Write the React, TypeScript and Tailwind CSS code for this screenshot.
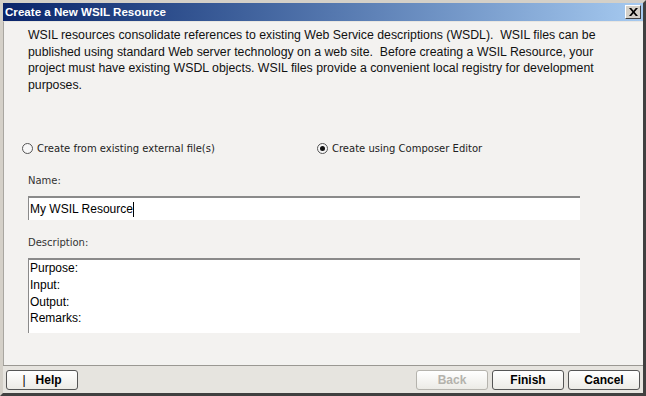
const sans = { fontFamily: '"Liberation Sans", Arial, sans-serif' };
const dejavu = { fontFamily: '"DejaVu Sans", sans-serif' };

function Radio({ checked, label }: { checked?: boolean; label: string }) {
  return (
    <label className="flex items-center gap-[4px] h-[14px] text-[10px] text-[#222]" style={dejavu}>
      <span className="w-[11px] h-[11px] rounded-full border border-[#555] bg-[#f7f7f7] flex items-center justify-center">
        {checked && <span className="w-[5px] h-[5px] rounded-full bg-[#111]" />}
      </span>
      {label}
    </label>
  );
}

function Button({ children, disabled }: { children: React.ReactNode; disabled?: boolean }) {
  return (
    <button
      type="button"
      disabled={disabled}
      className={`w-[72px] h-[20px] rounded-[3px] border text-[12px] font-bold leading-none bg-gradient-to-b from-white to-[#ecebe6] ${
        disabled ? 'border-[#b5b3ad] text-[#b4b2ac]' : 'border-[#555] text-black'
      }`}
      style={sans}
    >
      {children}
    </button>
  );
}

export default function App() {
  return (
    <div className="w-[646px] h-[396px] flex flex-col bg-[#d4d0c8] border-[3px] border-l-[#d4d0c8] border-t-[#d4d0c8] border-r-[#404040] border-b-[#404040]">
      {/* title bar */}
      <div className="h-[18px] flex items-center justify-between pl-[2px] pr-[2px] bg-gradient-to-r from-[#0a246a] to-[#a6caf0]">
        <span className="text-white font-bold text-[11.6px]" style={sans}>
          Create a New WSIL Resource
        </span>
        <span className="w-[16px] h-[14px] bg-[#d4d0c8] border border-t-white border-l-white border-r-[#404040] border-b-[#404040] flex items-center justify-center">
          <svg width="9" height="8" viewBox="0 0 9 8">
            <path d="M0 0h2.2l2.3 2.8L6.8 0H9L5.6 4 9 8H6.8L4.5 5.2 2.2 8H0l3.4-4z" fill="#000" />
          </svg>
        </span>
      </div>

      {/* body */}
      <div className="flex-1 flex flex-col bg-[#f3f2f0] border-t border-[#e8e6e1] border-l border-l-[#a8a6a0]">
        <div className="px-[24px] pt-[5px] text-[12.3px] leading-[16.6px] text-[#111] whitespace-pre" style={sans}>
          <div>WSIL resources consolidate references to existing Web Service descriptions (WSDL).  WSIL files can be</div>
          <div>published using standard Web server technology on a web site.  Before creating a WSIL Resource, your</div>
          <div>project must have existing WSDL objects. WSIL files provide a convenient local registry for development</div>
          <div>purposes.</div>
        </div>

        <div className="mt-[48px] flex pl-[18px]">
          <div className="w-[295px]">
            <Radio label="Create from existing external file(s)" />
          </div>
          <Radio checked label="Create using Composer Editor" />
        </div>

        <div className="pl-[24px] pr-[63px] flex flex-col">
          <div className="mt-[18px] h-[14px] text-[10px] text-[#333]" style={dejavu}>
            Name:
          </div>
          <div className="mt-[9px] h-[24px] bg-white border-t-2 border-l border-t-[#8a8a8a] border-l-[#8a8a8a] flex items-center pl-[1px] text-[12px] text-black" style={sans}>
            My WSIL Resource
            <span className="w-px h-[15px] bg-black" />
          </div>
          <div className="mt-[15px] h-[14px] text-[10px] text-[#333]" style={dejavu}>
            Description:
          </div>
          <div className="mt-[9px] h-[75px] bg-white border-t-2 border-l border-t-[#8a8a8a] border-l-[#8a8a8a] pl-[1px] text-[12px] leading-[16.6px] text-black" style={sans}>
            <div>Purpose:</div>
            <div>Input:</div>
            <div>Output:</div>
            <div>Remarks:</div>
          </div>
        </div>
      </div>

      {/* footer */}
      <div className="h-[28px] flex items-start justify-between pt-[4px] pl-[3px] pr-[3px] bg-[#e6e4df] border-t border-[#9a9893]">
        <Button>
          <span className="inline-flex items-center gap-[10px]">
            <span className="font-normal">|</span>
            Help
          </span>
        </Button>
        <div className="flex gap-[4px]">
          <Button disabled>Back</Button>
          <Button>Finish</Button>
          <Button>Cancel</Button>
        </div>
      </div>
    </div>
  );
}
